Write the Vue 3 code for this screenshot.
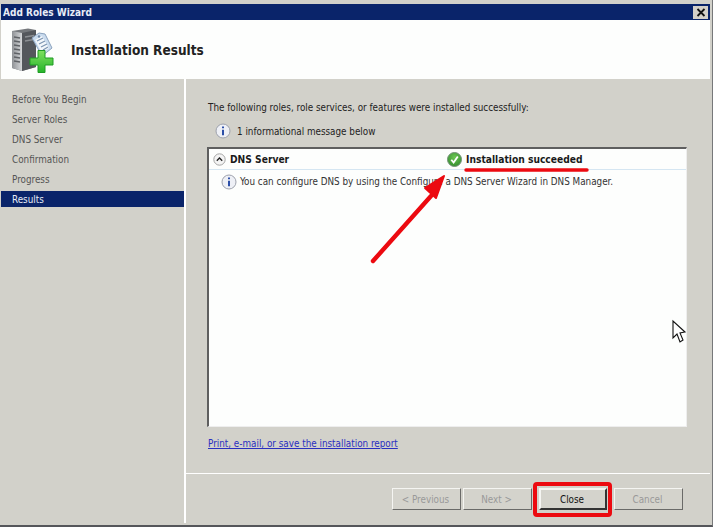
<script setup>
const steps = ['Before You Begin', 'Server Roles', 'DNS Server', 'Confirmation', 'Progress', 'Results']
const buttons = [
  { label: '< Previous', disabled: true },
  { label: 'Next >', disabled: true },
  { label: 'Close', disabled: false },
  { label: 'Cancel', disabled: true }
]
</script>

<template>
  <div class="screen">
    <div class="window">
      <div class="titlebar">
        <span class="title-text">Add Roles Wizard</span>
        <span class="close-x">
          <svg width="12" height="11" viewBox="0 0 12 11"><path d="M2.5 2 L9.5 9 M9.5 2 L2.5 9" stroke="#111" stroke-width="1.8" fill="none"/></svg>
        </span>
      </div>
      <header class="head">
        <svg class="head-icon" width="46" height="46" viewBox="0 0 46 46">
          <defs>
            <linearGradient id="plusFill" x1="0" y1="0" x2="0" y2="1">
              <stop offset="0" stop-color="#7fe05f"/>
              <stop offset="1" stop-color="#25b42a"/>
            </linearGradient>
            <linearGradient id="frontFill" x1="0" y1="0" x2="1" y2="0">
              <stop offset="0" stop-color="#8f9296"/>
              <stop offset="1" stop-color="#d5d7d9"/>
            </linearGradient>
          </defs>
          <path d="M0 4 L16 1.5 L24 3 L24 40 L10 44 L0 41 Z" fill="#75787c"/>
          <path d="M0 4 L10 6 L10 44 L0 41 Z" fill="url(#frontFill)"/>
          <path d="M10 6 L24 3 L24 40 L10 44 Z" fill="#54575c"/>
          <path d="M2 10 L8 11 M2 14 L8 15 M2 18 L8 19 M2 22 L8 23 M2 26 L8 27 M2 30 L8 31 M2 34 L8 35" stroke="#5f6266" stroke-width="1.3"/>
          <path d="M13 10 L22 8.5 M13 14 L22 12.5" stroke="#8c8f93" stroke-width="1.5"/>
          <path d="M20 11 L27 6 L33 7 L40 21 L30 29 Z" fill="#c9dbee" stroke="#8aa2bd"/>
          <path d="M23 13 L30 9 L37 21 L30 26 Z" fill="#f3f7fb"/>
          <path d="M25 14 L31 11 M27 17 L33 14 M29 20 L35 17 M31 23 L36 20" stroke="#7d95b2" stroke-width="1.2"/>
          <circle cx="27" cy="9.5" r="1.2" fill="#6f87a5"/>
          <path d="M26 23.5 H33 V31 H41 V38 H33 V45.5 H26 V38 H18 V31 H26 Z" fill="url(#plusFill)" stroke="#1e9c24" stroke-width="1"/>
        </svg>
        <h1 class="head-title">Installation Results</h1>
      </header>
      <div class="body">
        <nav class="side">
          <div v-for="s in steps" :key="s" class="step" :class="{ active: s === 'Results' }">{{ s }}</div>
        </nav>
        <main class="main">
          <div class="content">
            <p class="intro">The following roles, role services, or features were installed successfully:</p>
            <div class="msg-row">
              <svg class="info" width="16" height="16" viewBox="0 0 16 16">
                <circle cx="8" cy="8" r="7" fill="#eef0f6" stroke="#9ea2ad"/>
                <path d="M8 3.4 V5.2 M8 6.8 V12.2" stroke="#2c4fa8" stroke-width="2" fill="none"/>
              </svg>
              <span>1 informational message below</span>
            </div>
            <section class="box">
              <div class="box-head">
                <div class="box-name">
                  <span class="chev">
                    <svg width="13" height="13" viewBox="0 0 13 13">
                      <circle cx="6.5" cy="6.5" r="5.7" fill="#f4f4f4" stroke="#a5a5a5"/>
                      <path d="M3.8 7.8 L6.5 5 L9.2 7.8" stroke="#222" stroke-width="1.3" fill="none"/>
                    </svg>
                  </span>
                  <b>DNS Server</b>
                </div>
                <div class="box-status">
                  <svg width="15" height="15" viewBox="0 0 15 15">
                    <defs>
                      <radialGradient id="okFill" cx="0.5" cy="0.35" r="0.7">
                        <stop offset="0" stop-color="#6cc653"/>
                        <stop offset="1" stop-color="#2f8a2c"/>
                      </radialGradient>
                    </defs>
                    <circle cx="7.5" cy="7.5" r="7" fill="url(#okFill)" stroke="#76917a"/>
                    <path d="M4.3 7.8 L6.6 10.6 L10.8 4.4" stroke="#fff" stroke-width="1.8" fill="none"/>
                  </svg>
                  <b>Installation succeeded</b>
                </div>
              </div>
              <div class="box-line">
                <svg class="info" width="16" height="16" viewBox="0 0 16 16">
                  <circle cx="8" cy="8" r="7" fill="#eef0f6" stroke="#9ea2ad"/>
                  <path d="M8 3.4 V5.2 M8 6.8 V12.2" stroke="#2c4fa8" stroke-width="2" fill="none"/>
                </svg>
                <span>You can configure DNS by using the Configure a DNS Server Wizard in DNS Manager.</span>
              </div>
            </section>
            <a class="report">Print, e-mail, or save the installation report</a>
          </div>
          <footer class="foot">
            <button v-for="b in buttons" :key="b.label" class="btn" :class="{ off: b.disabled, primary: !b.disabled }">{{ b.label }}</button>
          </footer>
        </main>
      </div>
    </div>
    <svg class="marks" width="713" height="527" viewBox="0 0 713 527">
      <path d="M466 170 H587" stroke="#ec0a10" stroke-width="3.4" stroke-linecap="round" fill="none"/>
      <path d="M373 261 L431 196" stroke="#ec0a10" stroke-width="4.4" stroke-linecap="round" fill="none"/>
      <path d="M444 176 L425 188 L436 198 Z" fill="#ec0a10" stroke="#ec0a10" stroke-width="2" stroke-linejoin="round"/>
      <rect x="535" y="484" width="75" height="31" rx="2" fill="none" stroke="#ec0a10" stroke-width="4"/>
      <path d="M673 321 V338 L677 334 L680 342 L683 340 L680 333 L685 332 Z" fill="#fff" stroke="#111" stroke-width="1.1"/>
    </svg>
  </div>
</template>

<style>
html, body { margin: 0; background: #d2d1ca; }
</style>

<style scoped>
.screen {
  position: relative;
  width: 713px;
  height: 527px;
  overflow: hidden;
  background: #d2d1ca;
  font-family: "DejaVu Sans", Tahoma, sans-serif;
  font-stretch: condensed;
  font-size: 9.8px;
  color: #222;
}
.window {
  box-sizing: border-box;
  height: 100%;
  display: flex;
  flex-direction: column;
  padding: 4px 2px 2px 1px;
  border-bottom: 2px solid #55565a;
  border-right: 1px solid #77787a;
}
.titlebar {
  height: 16px;
  flex: none;
  display: flex;
  align-items: center;
  justify-content: space-between;
  padding: 0 2px 0 2px;
  background: #0a246a;
  color: #e8edf6;
  font-weight: 700;
  font-size: 10px;
}
.close-x {
  width: 15px;
  height: 13px;
  display: flex;
  align-items: center;
  justify-content: center;
  background: #d4d0c8;
}
.head {
  height: 59px;
  flex: none;
  display: flex;
  align-items: center;
  background: #fdfefd;
  padding-left: 11px;
  gap: 13px;
}
.head-icon { overflow: visible; }
.head-title {
  margin: 0;
  font-size: 13.5px;
  font-weight: 700;
  color: #222;
}
.body {
  flex: 1;
  min-height: 0;
  display: flex;
}
.side {
  flex: none;
  padding-top: 11px;
  box-sizing: border-box;
  border-right: 2px solid #fff;
  width: 185px;
}
.step {
  height: 20px;
  line-height: 20px;
  padding-left: 11px;
  color: #555;
}
.step.active {
  height: 16px;
  line-height: 18px;
  margin-top: 1px;
  background: #0a246a;
  color: #e6ecf6;
}
.main {
  flex: 1;
  min-width: 0;
  display: flex;
  flex-direction: column;
}
.content {
  flex: 1;
  min-height: 0;
  padding: 22px 23px 0 21px;
  display: flex;
  flex-direction: column;
  border-bottom: 1px solid #fff;
}
.intro { margin: 0 0 0 1px; height: 14px; line-height: 14px; color: #222; }
.msg-row {
  margin: 7px 0 0 8px;
  height: 18px;
  display: flex;
  align-items: center;
  gap: 6px;
}
.box {
  margin-top: 7px;
  height: 280px;
  box-sizing: border-box;
  background: #fdfefd;
  border: 1px solid #5f5f5f;
  border-right-color: #eee;
  border-bottom-color: #eee;
  border-top-width: 2px;
  border-left-width: 2px;
}
.box-head {
  height: 20px;
  display: flex;
  align-items: center;
  border-bottom: 1px solid #d5e6f2;
}
.box-name {
  width: 238px;
  display: flex;
  align-items: center;
  padding-left: 4px;
  box-sizing: border-box;
  gap: 4px;
  color: #1a1a1a;
}
.box-name b, .box-status b { font-size: 10.2px; }
.chev { display: flex; }
.box-status { display: flex; align-items: center; gap: 4px; color: #1a1a1a; }
.box-line {
  display: flex;
  align-items: center;
  gap: 3px;
  height: 21px;
  padding: 1px 0 0 12px;
  color: #333;
}
.report {
  margin: 11px 0 0 1px;
  color: #2a2fc0;
  text-decoration: underline;
}
.foot {
  height: 49px;
  flex: none;
  box-sizing: border-box;
  display: flex;
  align-items: flex-start;
  padding: 14px 0 0 206px;
  gap: 2px;
}
.btn {
  width: 69px;
  height: 22px;
  padding: 0 2px 0 0;
  font: inherit;
  background: #d4d3cc;
  border: 1px solid;
  border-color: #f5f5f2 #6a6a68 #6a6a68 #f5f5f2;
  color: #999;
}
.btn.primary {
  width: 68px;
  margin: 0 5px;
  color: #111;
  border: 2px solid;
  border-color: #f5f5f2 #333 #333 #f5f5f2;
}
.marks {
  position: absolute;
  left: 0;
  top: 0;
  pointer-events: none;
}
</style>
